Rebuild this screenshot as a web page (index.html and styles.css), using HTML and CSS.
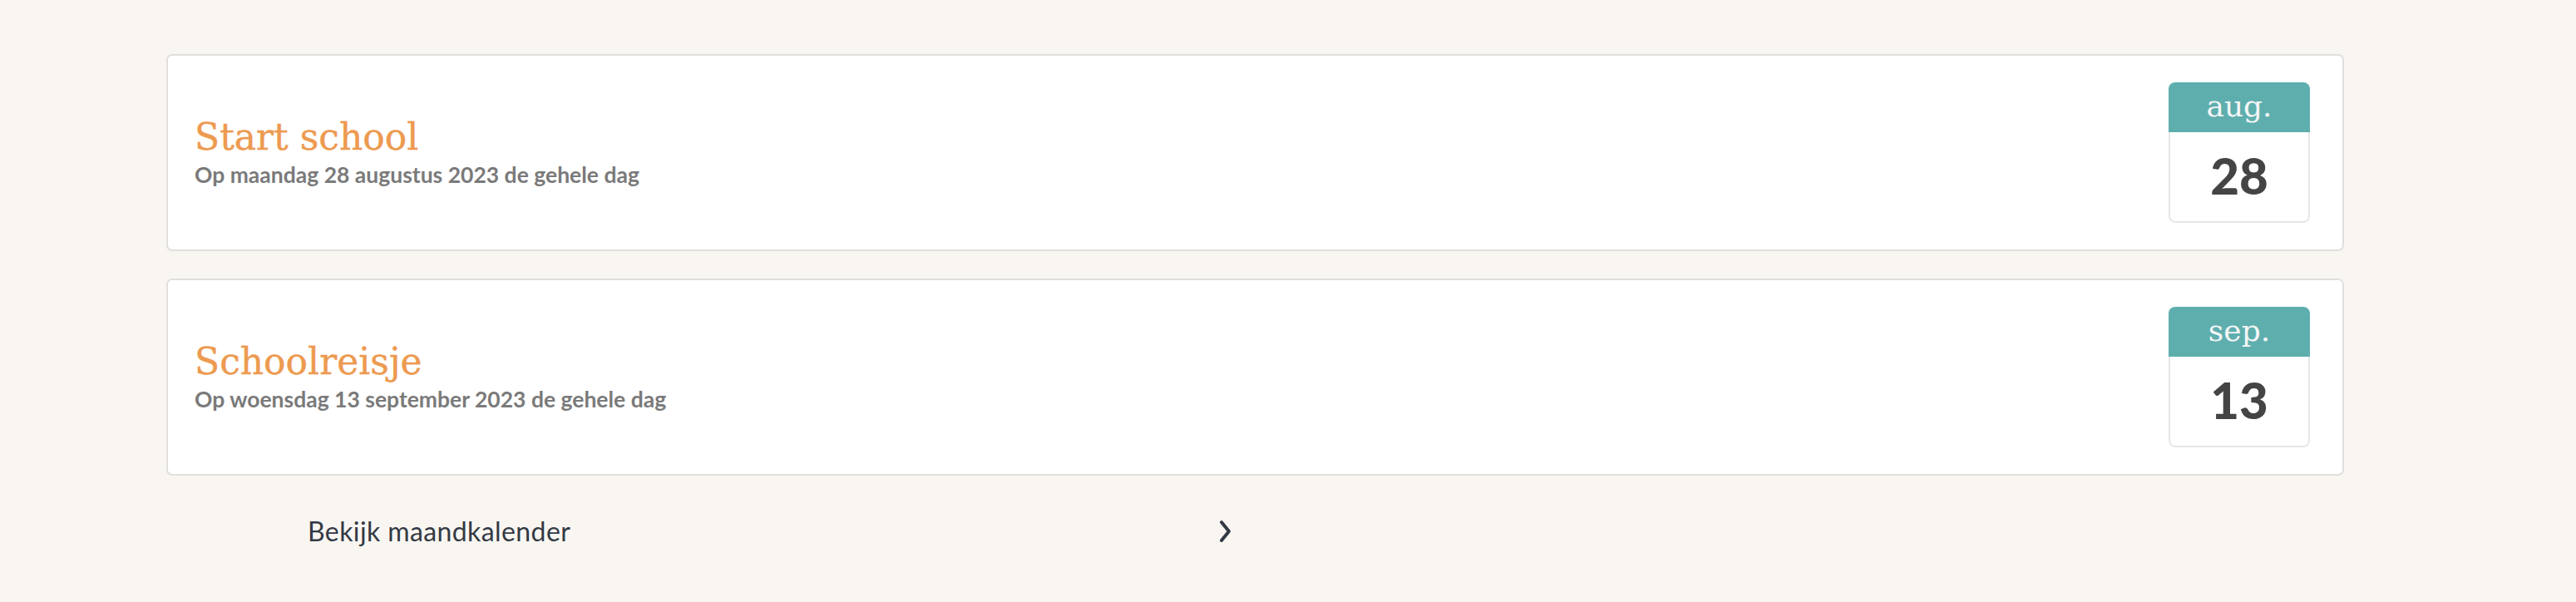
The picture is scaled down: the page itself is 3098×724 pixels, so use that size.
FILE: index.html
```html
<!DOCTYPE html>
<html lang="nl">
<head>
  <meta charset="UTF-8">
  <meta name="viewport" content="width=device-width, initial-scale=1.0">
  <title>Agenda</title>
  <link rel="stylesheet" href="styles.css">
</head>
<body>
  <div class="agenda">
    <div class="event">
      <div class="event-info">
        <h3 class="event-title">Start school</h3>
        <p class="event-when">Op maandag 28 augustus 2023 de gehele dag</p>
      </div>
      <div class="date-badge">
        <div class="month">aug.</div>
        <div class="day">28</div>
      </div>
    </div>

    <div class="event">
      <div class="event-info">
        <h3 class="event-title">Schoolreisje</h3>
        <p class="event-when">Op woensdag 13 september 2023 de gehele dag</p>
      </div>
      <div class="date-badge">
        <div class="month">sep.</div>
        <div class="day">13</div>
      </div>
    </div>

    <a class="month-link" href="#">
      <span>Bekijk maandkalender</span>
      <svg width="18" height="28" viewBox="0 0 18 28">
        <path d="M4 3 L13 14 L4 25" fill="none" stroke="#333a44" stroke-width="4" stroke-linecap="round" stroke-linejoin="round"/>
      </svg>
    </a>
  </div>
</body>
</html>
```

FILE: styles.css
```css
* { box-sizing: border-box; }
html, body {
  margin: 0;
  padding: 0;
  background: #f9f6f2;
  font-family: 'Lato', sans-serif;
}

.agenda {
  padding: 65px 279px 20px 200px;
  display: flex;
  flex-direction: column;
  gap: 33px;
}

.event {
  display: flex;
  justify-content: space-between;
  align-items: center;
  background: #fff;
  border: 2px solid #e1dfdc;
  border-radius: 7px;
  padding: 32px 39px 32px 32px;
}

.event-title {
  margin: 0;
  font-family: 'DejaVu Serif', serif;
  font-weight: normal;
  font-size: 44px;
  line-height: 1.1;
  color: #ed9a50;
  -webkit-text-stroke: 0.4px #ed9a50;
}

.event-when {
  margin: 5px 0 0;
  font-weight: bold;
  font-size: 26.5px;
  color: #7a7a7a;
}

.date-badge {
  width: 170px;
  border-radius: 8px;
  overflow: hidden;
  text-align: center;
}

.date-badge .month {
  height: 60px;
  background: #5faeae;
  color: #f4f6f6;
  font-family: 'DejaVu Serif', serif;
  font-size: 36px;
  line-height: 58px;
}

.date-badge .day {
  height: 109px;
  border: 2px solid #e6e6ea;
  border-top: none;
  border-radius: 0 0 8px 8px;
  color: #444;
  font-weight: 900;
  font-size: 60px;
  line-height: 105px;
}

.month-link {
  display: flex;
  justify-content: space-between;
  align-items: center;
  width: 1113px;
  margin: 14px 0 0 170px;
  color: #333a44;
  text-decoration: none;
  font-size: 32px;
  letter-spacing: 0.4px;
}
```
